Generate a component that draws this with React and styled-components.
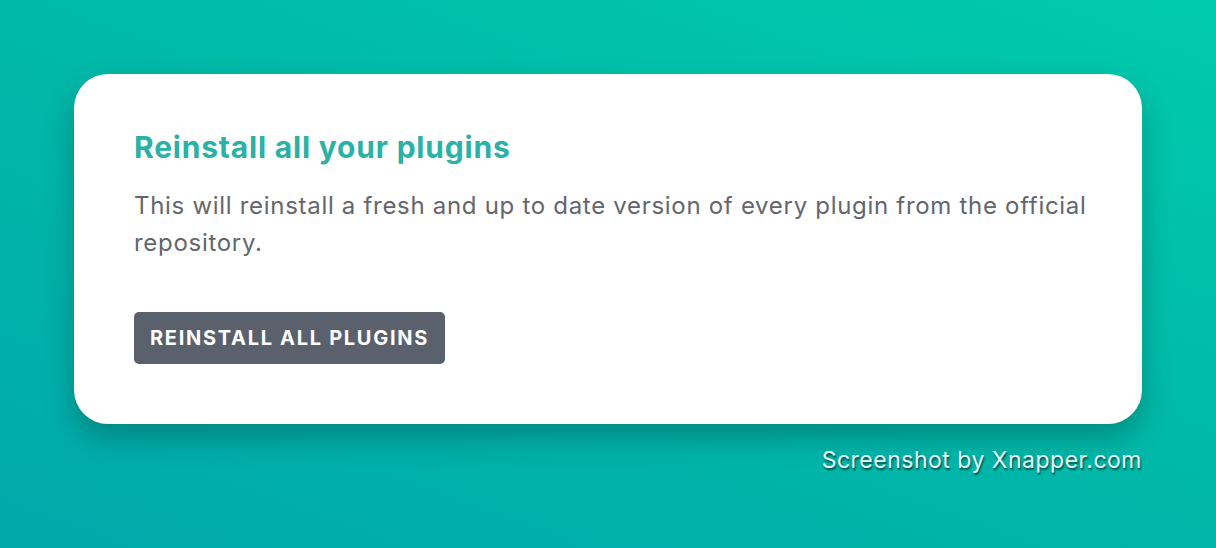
import React from 'react';
import styled, { createGlobalStyle } from 'styled-components';

const GlobalStyle = createGlobalStyle`
    html, body {
        margin: 0;
        padding: 0;
    }
    body {
        font-family: Inter, "Noto Sans", sans-serif;
    }
`;

const Backdrop = styled.div`
    width: 1216px;
    height: 548px;
    box-sizing: border-box;
    padding: 74px 74px 0;
    background: linear-gradient(200deg, #00cbad 0%, #00b8a8 50%, #00a9ab 100%);
    display: flex;
    flex-direction: column;
    align-items: stretch;
`;

const Card = styled.div`
    background: #ffffff;
    border-radius: 34px;
    height: 350px;
    box-sizing: border-box;
    padding: 55px 48px 0 60px;
    box-shadow: 0 14px 28px rgba(0, 60, 60, 0.35);
`;

const Title = styled.h2`
    margin: 0;
    font-size: 30px;
    font-weight: 700;
    color: #2bb1a5;
    letter-spacing: 0.8px;
    line-height: 36px;
`;

const Text = styled.p`
    margin: 22px 0 0;
    font-size: 24px;
    line-height: 37px;
    letter-spacing: 0.7px;
    color: #63666d;
`;

const Button = styled.button`
    display: block;
    margin-top: 51px;
    height: 52px;
    padding: 0 16px;
    border: none;
    border-radius: 5px;
    background: #5a616d;
    color: #ffffff;
    font-family: Inter, "Noto Sans", sans-serif;
    font-size: 20px;
    font-weight: 700;
    letter-spacing: 1.7px;
    text-transform: uppercase;
    cursor: pointer;
`;

const Caption = styled.div`
    align-self: flex-end;
    margin-top: 22px;
    font-size: 23px;
    letter-spacing: 0.5px;
    color: #e4fbf8;
    text-shadow: 1px 2px 2px rgba(0, 50, 50, 0.8);
`;

const App = () => {
    return (
        <>
            <GlobalStyle />
            <Backdrop>
                <Card>
                    <Title>Reinstall all your plugins</Title>
                    <Text>
                        This will reinstall a fresh and up to date version of every plugin from the official repository.
                    </Text>
                    <Button>Reinstall all plugins</Button>
                </Card>
                <Caption>Screenshot by Xnapper.com</Caption>
            </Backdrop>
        </>
    );
};

export default App;
